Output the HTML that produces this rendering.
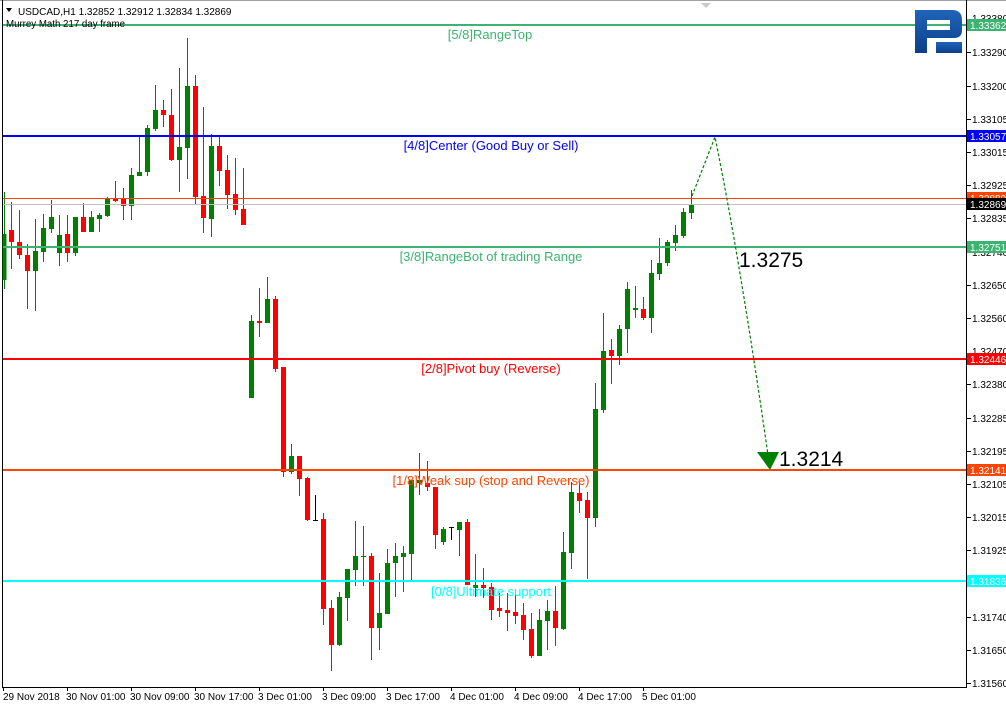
<!DOCTYPE html>
<html><head><meta charset="utf-8"><style>
html,body{margin:0;padding:0;background:#fff;}
svg{display:block;font-family:"Liberation Sans",Tahoma,sans-serif;}
</style></head><body>
<svg width="1006" height="706" viewBox="0 0 1006 706" xmlns="http://www.w3.org/2000/svg">
<rect width="1006" height="706" fill="#fff"/>
<line x1="0" y1="0.5" x2="1006" y2="0.5" stroke="#a0a0a0"/>
<polygon points="701,3 711,3 706,8" fill="#c8c8c8"/>
<line x1="2.5" y1="0" x2="2.5" y2="688" stroke="#000"/>
<line x1="966.5" y1="0" x2="966.5" y2="688" stroke="#000"/>
<line x1="2" y1="687.5" x2="967" y2="687.5" stroke="#000"/>

<g stroke="#008000" fill="#008000">
<line x1="4.5" y1="192" x2="4.5" y2="289"/><rect x="2.5" y="234" width="4" height="46" stroke="none"/>
<line x1="35.5" y1="219" x2="35.5" y2="311"/><rect x="33" y="251" width="5" height="20" stroke="none"/>
<line x1="43.5" y1="214" x2="43.5" y2="262"/><rect x="41" y="228" width="5" height="24" stroke="none"/>
<line x1="51.5" y1="200" x2="51.5" y2="233"/><rect x="49" y="217" width="5" height="12" stroke="none"/>
<line x1="59.5" y1="215" x2="59.5" y2="266"/><rect x="57" y="235" width="5" height="18" stroke="none"/>
<line x1="75.5" y1="217" x2="75.5" y2="256"/><rect x="73" y="217" width="5" height="36" stroke="none"/>
<line x1="91.5" y1="211" x2="91.5" y2="232"/><rect x="89" y="217" width="5" height="15" stroke="none"/>
<line x1="99.5" y1="213" x2="99.5" y2="232"/><rect x="97" y="215" width="5" height="4" stroke="none"/>
<line x1="107.5" y1="197" x2="107.5" y2="217"/><rect x="105" y="198" width="5" height="18" stroke="none"/>
<line x1="131.5" y1="168" x2="131.5" y2="220"/><rect x="129" y="175" width="5" height="31" stroke="none"/>
<line x1="139.5" y1="135" x2="139.5" y2="176"/><rect x="137" y="172" width="5" height="4" stroke="none"/>
<line x1="147.5" y1="125" x2="147.5" y2="176"/><rect x="145" y="128" width="5" height="44" stroke="none"/>
<line x1="155.5" y1="85" x2="155.5" y2="131"/><rect x="153" y="110" width="5" height="19" stroke="none"/>
<line x1="179.5" y1="68" x2="179.5" y2="192"/><rect x="177" y="147" width="5" height="13" stroke="none"/>
<line x1="187.5" y1="38" x2="187.5" y2="179"/><rect x="185" y="86" width="5" height="62" stroke="none"/>
<line x1="211.5" y1="134" x2="211.5" y2="237"/><rect x="209" y="146" width="5" height="73" stroke="none"/>
<line x1="251.5" y1="315" x2="251.5" y2="398"/><rect x="249" y="321" width="5" height="77" stroke="none"/>
<line x1="267.5" y1="277" x2="267.5" y2="323"/><rect x="265" y="299" width="5" height="24" stroke="none"/>
<line x1="291.5" y1="444" x2="291.5" y2="474"/><rect x="289" y="456" width="5" height="16" stroke="none"/>
<line x1="339.5" y1="592" x2="339.5" y2="646"/><rect x="337" y="597" width="5" height="48" stroke="none"/>
<line x1="347.5" y1="569" x2="347.5" y2="621"/><rect x="345" y="569" width="5" height="29" stroke="none"/>
<line x1="355.5" y1="521" x2="355.5" y2="586"/><rect x="353" y="556" width="5" height="14" stroke="none"/>
<line x1="363.5" y1="526" x2="363.5" y2="586"/><rect x="361" y="556" width="5" height="1" stroke="none"/>
<line x1="379.5" y1="573" x2="379.5" y2="650"/><rect x="377" y="613" width="5" height="15" stroke="none"/>
<line x1="387.5" y1="549" x2="387.5" y2="614"/><rect x="385" y="563" width="5" height="51" stroke="none"/>
<line x1="395.5" y1="543" x2="395.5" y2="597"/><rect x="393" y="556" width="5" height="7" stroke="none"/>
<line x1="403.5" y1="546" x2="403.5" y2="592"/><rect x="401" y="553" width="5" height="4" stroke="none"/>
<line x1="411.5" y1="480" x2="411.5" y2="580"/><rect x="409" y="480" width="5" height="74" stroke="none"/>
<line x1="419.5" y1="453" x2="419.5" y2="495"/><rect x="417" y="480" width="5" height="3" stroke="none"/>
<line x1="443.5" y1="527" x2="443.5" y2="545"/><rect x="441" y="529" width="5" height="13" stroke="none"/>
<line x1="459.5" y1="522" x2="459.5" y2="556"/><rect x="457" y="522" width="5" height="8" stroke="none"/>
<line x1="475.5" y1="554" x2="475.5" y2="597"/><rect x="473" y="585" width="5" height="3" stroke="none"/>
<line x1="539.5" y1="609" x2="539.5" y2="656"/><rect x="537" y="620" width="5" height="36" stroke="none"/>
<line x1="547.5" y1="600" x2="547.5" y2="650"/><rect x="545" y="611" width="5" height="10" stroke="none"/>
<line x1="563.5" y1="532" x2="563.5" y2="630"/><rect x="561" y="552" width="5" height="77" stroke="none"/>
<line x1="571.5" y1="482" x2="571.5" y2="569"/><rect x="569" y="492" width="5" height="61" stroke="none"/>
<line x1="595.5" y1="383" x2="595.5" y2="527"/><rect x="593" y="409" width="5" height="109" stroke="none"/>
<line x1="603.5" y1="313" x2="603.5" y2="413"/><rect x="601" y="351" width="5" height="59" stroke="none"/>
<line x1="619.5" y1="325" x2="619.5" y2="365"/><rect x="617" y="329" width="5" height="27" stroke="none"/>
<line x1="627.5" y1="282" x2="627.5" y2="353"/><rect x="625" y="289" width="5" height="40" stroke="none"/>
<line x1="635.5" y1="286" x2="635.5" y2="318"/><rect x="633" y="308" width="5" height="2" stroke="none"/>
<line x1="651.5" y1="260" x2="651.5" y2="333"/><rect x="649" y="273" width="5" height="45" stroke="none"/>
<line x1="659.5" y1="238" x2="659.5" y2="280"/><rect x="657" y="263" width="5" height="11" stroke="none"/>
<line x1="667.5" y1="240" x2="667.5" y2="266"/><rect x="665" y="242" width="5" height="21" stroke="none"/>
<line x1="675.5" y1="225" x2="675.5" y2="251"/><rect x="673" y="235" width="5" height="8" stroke="none"/>
<line x1="683.5" y1="208" x2="683.5" y2="238"/><rect x="681" y="212" width="5" height="24" stroke="none"/>
<line x1="691.5" y1="190" x2="691.5" y2="219"/><rect x="689" y="205" width="5" height="8" stroke="none"/>
</g>
<g stroke="#ff0000" fill="#ff0000">
<line x1="11.5" y1="202" x2="11.5" y2="269"/><rect x="9" y="230" width="5" height="12" stroke="none"/>
<line x1="19.5" y1="210" x2="19.5" y2="259"/><rect x="17" y="242" width="5" height="13" stroke="none"/>
<line x1="27.5" y1="244" x2="27.5" y2="309"/><rect x="25" y="255" width="5" height="16" stroke="none"/>
<line x1="67.5" y1="215" x2="67.5" y2="262"/><rect x="65" y="234" width="5" height="19" stroke="none"/>
<line x1="83.5" y1="203" x2="83.5" y2="232"/><rect x="81" y="217" width="5" height="15" stroke="none"/>
<line x1="115.5" y1="181" x2="115.5" y2="202"/><rect x="113" y="198" width="5" height="3" stroke="none"/>
<line x1="123.5" y1="188" x2="123.5" y2="220"/><rect x="121" y="198" width="5" height="8" stroke="none"/>
<line x1="163.5" y1="100" x2="163.5" y2="127"/><rect x="161" y="110" width="5" height="5" stroke="none"/>
<line x1="171.5" y1="89" x2="171.5" y2="161"/><rect x="169" y="115" width="5" height="45" stroke="none"/>
<line x1="195.5" y1="75" x2="195.5" y2="205"/><rect x="193" y="86" width="5" height="111" stroke="none"/>
<line x1="203.5" y1="107" x2="203.5" y2="233"/><rect x="201" y="196" width="5" height="22" stroke="none"/>
<line x1="219.5" y1="135" x2="219.5" y2="186"/><rect x="217" y="146" width="5" height="25" stroke="none"/>
<line x1="227.5" y1="155" x2="227.5" y2="209"/><rect x="225" y="170" width="5" height="25" stroke="none"/>
<line x1="235.5" y1="158" x2="235.5" y2="215"/><rect x="233" y="194" width="5" height="16" stroke="none"/>
<line x1="243.5" y1="168" x2="243.5" y2="225"/><rect x="241" y="209" width="5" height="16" stroke="none"/>
<line x1="259.5" y1="288" x2="259.5" y2="337"/><rect x="257" y="321" width="5" height="2" stroke="none"/>
<line x1="275.5" y1="296" x2="275.5" y2="372"/><rect x="273" y="299" width="5" height="70" stroke="none"/>
<line x1="283.5" y1="367" x2="283.5" y2="477"/><rect x="281" y="367" width="5" height="105" stroke="none"/>
<line x1="299.5" y1="456" x2="299.5" y2="496"/><rect x="297" y="456" width="5" height="23" stroke="none"/>
<line x1="307.5" y1="477" x2="307.5" y2="521"/><rect x="305" y="478" width="5" height="42" stroke="none"/>
<line x1="323.5" y1="513" x2="323.5" y2="625"/><rect x="321" y="519" width="5" height="90" stroke="none"/>
<line x1="331.5" y1="600" x2="331.5" y2="671"/><rect x="329" y="608" width="5" height="37" stroke="none"/>
<line x1="371.5" y1="553" x2="371.5" y2="660"/><rect x="369" y="556" width="5" height="72" stroke="none"/>
<line x1="427.5" y1="461" x2="427.5" y2="491"/><rect x="425" y="483" width="5" height="4" stroke="none"/>
<line x1="435.5" y1="487" x2="435.5" y2="549"/><rect x="433" y="487" width="5" height="48" stroke="none"/>
<line x1="467.5" y1="519" x2="467.5" y2="585"/><rect x="465" y="522" width="5" height="63" stroke="none"/>
<line x1="483.5" y1="568" x2="483.5" y2="598"/><rect x="481" y="585" width="5" height="3" stroke="none"/>
<line x1="491.5" y1="583" x2="491.5" y2="620"/><rect x="489" y="587" width="5" height="23" stroke="none"/>
<line x1="499.5" y1="593" x2="499.5" y2="617"/><rect x="497" y="608" width="5" height="3" stroke="none"/>
<line x1="507.5" y1="593" x2="507.5" y2="631"/><rect x="505" y="610" width="5" height="3" stroke="none"/>
<line x1="515.5" y1="593" x2="515.5" y2="624"/><rect x="513" y="612" width="5" height="4" stroke="none"/>
<line x1="523.5" y1="603" x2="523.5" y2="640"/><rect x="521" y="615" width="5" height="15" stroke="none"/>
<line x1="531.5" y1="613" x2="531.5" y2="658"/><rect x="529" y="629" width="5" height="27" stroke="none"/>
<line x1="555.5" y1="586" x2="555.5" y2="646"/><rect x="553" y="611" width="5" height="17" stroke="none"/>
<line x1="579.5" y1="482" x2="579.5" y2="513"/><rect x="577" y="493" width="5" height="8" stroke="none"/>
<line x1="587.5" y1="492" x2="587.5" y2="579"/><rect x="585" y="500" width="5" height="18" stroke="none"/>
<line x1="611.5" y1="339" x2="611.5" y2="384"/><rect x="609" y="350" width="5" height="6" stroke="none"/>
<line x1="643.5" y1="297" x2="643.5" y2="320"/><rect x="641" y="309" width="5" height="9" stroke="none"/>
</g>
<g stroke="#000">
<line x1="315.5" y1="495" x2="315.5" y2="520"/><line x1="313" y1="520.5" x2="318" y2="520.5"/>
<line x1="451.5" y1="527" x2="451.5" y2="540"/><line x1="449" y1="527.5" x2="454" y2="527.5"/>
</g>

<line x1="3" y1="25" x2="966" y2="25" stroke="#3cb371" stroke-width="2"/>
<line x1="3" y1="136" x2="966" y2="136" stroke="#0000ff" stroke-width="2"/>
<line x1="3" y1="198.5" x2="966" y2="198.5" stroke="#ff4500" stroke-width="1"/>
<line x1="3" y1="204.5" x2="966" y2="204.5" stroke="#c0c0c0" stroke-width="1"/>
<line x1="3" y1="247" x2="966" y2="247" stroke="#3cb371" stroke-width="2"/>
<line x1="3" y1="359" x2="966" y2="359" stroke="#ff0000" stroke-width="2"/>
<line x1="3" y1="470" x2="966" y2="470" stroke="#ff4500" stroke-width="2"/>
<line x1="3" y1="581" x2="966" y2="581" stroke="#00ffff" stroke-width="2"/>

<g font-size="13" text-anchor="middle">
<text x="490" y="39" fill="#3cb371">[5/8]RangeTop</text>
<text x="491" y="150" fill="#0000ff">[4/8]Center (Good Buy or Sell)</text>
<text x="491" y="261" fill="#3cb371">[3/8]RangeBot of trading Range</text>
<text x="491" y="373" fill="#ff0000">[2/8]Pivot buy (Reverse)</text>
<text x="491" y="485" fill="#ff4500">[1/8]Weak sup (stop and Reverse)</text>
<text x="491" y="596" fill="#00ffff">[0/8]Ultimate support</text>
</g>

<path d="M692,196 L715,137 Q740,260 768,455" fill="none" stroke="#008000" stroke-width="1.2" stroke-dasharray="3,2"/>
<polygon points="757,452 779,452 770,470" fill="#008000"/>
<text x="739" y="267" font-size="21" fill="#000">1.3275</text>
<text x="779" y="466" font-size="21" fill="#000">1.3214</text>

<polygon points="6,8 12,8 9,12" fill="#000"/>
<text x="18" y="15" font-size="10" fill="#000">USDCAD,H1  1.32852 1.32912 1.32834 1.32869</text>
<text x="6" y="27" font-size="9.7" fill="#000">Murrey Math 217 day frame</text>

<defs><linearGradient id="lg" x1="0" y1="0" x2="0" y2="1"><stop offset="0" stop-color="#2064b8"/><stop offset="1" stop-color="#0c3f8a"/></linearGradient></defs>
<path d="M915,10 H952 Q962,10 962,20 V30 Q962,38 954,38 H927 V53 H915 Z M927,20 V30 H950 V20 Z" fill="url(#lg)" fill-rule="evenodd"/>
<rect x="936" y="42" width="26" height="11" fill="url(#lg)"/>

<g font-size="10" fill="#000">
<g stroke="#000">
<line x1="967" y1="52.5" x2="971" y2="52.5"/><line x1="967" y1="86.5" x2="971" y2="86.5"/><line x1="967" y1="119.5" x2="971" y2="119.5"/><line x1="967" y1="152.5" x2="971" y2="152.5"/><line x1="967" y1="185.5" x2="971" y2="185.5"/><line x1="967" y1="218.5" x2="971" y2="218.5"/><line x1="967" y1="285.5" x2="971" y2="285.5"/><line x1="967" y1="318.5" x2="971" y2="318.5"/><line x1="967" y1="384.5" x2="971" y2="384.5"/><line x1="967" y1="418.5" x2="971" y2="418.5"/><line x1="967" y1="451.5" x2="971" y2="451.5"/><line x1="967" y1="484.5" x2="971" y2="484.5"/><line x1="967" y1="517.5" x2="971" y2="517.5"/><line x1="967" y1="550.5" x2="971" y2="550.5"/><line x1="967" y1="617.5" x2="971" y2="617.5"/><line x1="967" y1="650.5" x2="971" y2="650.5"/><line x1="967" y1="683.5" x2="971" y2="683.5"/>
</g>
<text x="972" y="22">1.33380</text>
<text x="972" y="56">1.33290</text>
<text x="972" y="90">1.33200</text>
<text x="972" y="123">1.33105</text>
<text x="972" y="156">1.33015</text>
<text x="972" y="189">1.32925</text>
<text x="972" y="222">1.32835</text>
<text x="972" y="256">1.32740</text>
<text x="972" y="289">1.32650</text>
<text x="972" y="322">1.32560</text>
<text x="972" y="355">1.32470</text>
<text x="972" y="388">1.32380</text>
<text x="972" y="422">1.32285</text>
<text x="972" y="455">1.32195</text>
<text x="972" y="488">1.32105</text>
<text x="972" y="521">1.32015</text>
<text x="972" y="554">1.31925</text>
<text x="972" y="621">1.31740</text>
<text x="972" y="654">1.31650</text>
<text x="972" y="687">1.31560</text>
</g>
<g font-size="10">
<rect x="967" y="19" width="39" height="12" fill="#3cb371"/><text x="970" y="29" fill="#fff">1.33362</text>
<rect x="967" y="130" width="39" height="12" fill="#0000ff"/><text x="970" y="140" fill="#fff">1.33057</text>
<rect x="967" y="192" width="39" height="12" fill="#ff4500"/><text x="970" y="202" fill="#fff">1.32889</text>
<rect x="967" y="198" width="39" height="12" fill="#000"/><text x="970" y="208" fill="#fff">1.32869</text>
<rect x="967" y="241" width="39" height="12" fill="#3cb371"/><text x="970" y="251" fill="#fff">1.32751</text>
<rect x="967" y="353" width="39" height="12" fill="#ff0000"/><text x="970" y="363" fill="#fff">1.32446</text>
<rect x="967" y="464" width="39" height="12" fill="#ff4500"/><text x="970" y="474" fill="#fff">1.32141</text>
<rect x="967" y="575" width="39" height="12" fill="#00ffff"/><text x="970" y="585" fill="#fff">1.31836</text>
</g>

<g stroke="#000">
<line x1="3.5" y1="687" x2="3.5" y2="691"/><line x1="67.5" y1="687" x2="67.5" y2="691"/><line x1="131.5" y1="687" x2="131.5" y2="691"/><line x1="195.5" y1="687" x2="195.5" y2="691"/><line x1="259.5" y1="687" x2="259.5" y2="691"/><line x1="323.5" y1="687" x2="323.5" y2="691"/><line x1="387.5" y1="687" x2="387.5" y2="691"/><line x1="451.5" y1="687" x2="451.5" y2="691"/><line x1="515.5" y1="687" x2="515.5" y2="691"/><line x1="579.5" y1="687" x2="579.5" y2="691"/><line x1="643.5" y1="687" x2="643.5" y2="691"/>
</g>
<g font-size="10" fill="#000">
<text x="3" y="700">29 Nov 2018</text>
<text x="66" y="700">30 Nov 01:00</text>
<text x="130" y="700">30 Nov 09:00</text>
<text x="194" y="700">30 Nov 17:00</text>
<text x="258" y="700">3 Dec 01:00</text>
<text x="322" y="700">3 Dec 09:00</text>
<text x="386" y="700">3 Dec 17:00</text>
<text x="450" y="700">4 Dec 01:00</text>
<text x="514" y="700">4 Dec 09:00</text>
<text x="578" y="700">4 Dec 17:00</text>
<text x="642" y="700">5 Dec 01:00</text>
</g>
</svg>
</body></html>
